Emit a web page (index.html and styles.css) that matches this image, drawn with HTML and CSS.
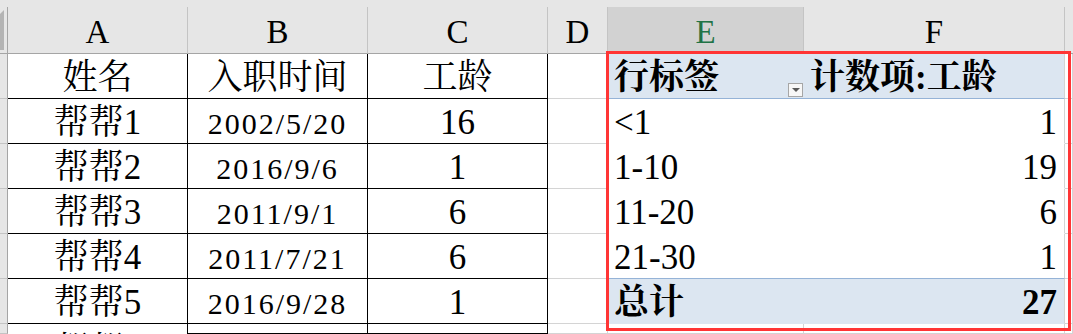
FILE: index.html
```html
<!doctype html>
<html lang="zh-CN">
  <head>
    <meta charset="utf-8">
    <title>工龄透视表</title>
    <link rel="stylesheet" href="styles.css">
  </head>
  <body>
    <div class="sheet">
      <div class="strip"></div>

      <!-- column letters -->
      <div class="corner"><div class="corner-mark"></div></div>
      <div class="colhead">A</div>
      <div class="colhead">B</div>
      <div class="colhead">C</div>
      <div class="colhead">D</div>
      <div class="colhead selected">E</div>
      <div class="colhead">F</div>
      <div class="colhead edge"></div>

      <!-- row 1 -->
      <div class="rowhead"></div>
      <div class="cell data">姓名</div>
      <div class="cell data">入职时间</div>
      <div class="cell data">工龄</div>
      <div class="cell blank"></div>
      <div class="cell pv pv-head pv-label">行标签<span class="filter-btn"></span></div>
      <div class="cell pv pv-head pv-field">计数项:工龄</div>
      <div class="cell blank"></div>

      <!-- row 2 -->
      <div class="rowhead"></div>
      <div class="cell data">帮帮1</div>
      <div class="cell data date">2002/5/20</div>
      <div class="cell data">16</div>
      <div class="cell blank"></div>
      <div class="cell pv pv-label">&lt;1</div>
      <div class="cell pv pv-num">1</div>
      <div class="cell blank"></div>

      <!-- row 3 -->
      <div class="rowhead"></div>
      <div class="cell data">帮帮2</div>
      <div class="cell data date">2016/9/6</div>
      <div class="cell data">1</div>
      <div class="cell blank"></div>
      <div class="cell pv pv-label">1-10</div>
      <div class="cell pv pv-num">19</div>
      <div class="cell blank"></div>

      <!-- row 4 -->
      <div class="rowhead"></div>
      <div class="cell data">帮帮3</div>
      <div class="cell data date">2011/9/1</div>
      <div class="cell data">6</div>
      <div class="cell blank"></div>
      <div class="cell pv pv-label">11-20</div>
      <div class="cell pv pv-num">6</div>
      <div class="cell blank"></div>

      <!-- row 5 -->
      <div class="rowhead"></div>
      <div class="cell data">帮帮4</div>
      <div class="cell data date">2011/7/21</div>
      <div class="cell data">6</div>
      <div class="cell blank"></div>
      <div class="cell pv pv-label pv-last">21-30</div>
      <div class="cell pv pv-num pv-last">1</div>
      <div class="cell blank"></div>

      <!-- row 6 -->
      <div class="rowhead"></div>
      <div class="cell data">帮帮5</div>
      <div class="cell data date">2016/9/28</div>
      <div class="cell data">1</div>
      <div class="cell blank"></div>
      <div class="cell pv pv-total pv-label">总计</div>
      <div class="cell pv pv-total pv-num">27</div>
      <div class="cell blank"></div>

      <!-- row 7, only its top shows -->
      <div class="rowhead"></div>
      <div class="cell data peek">帮帮6</div>
      <div class="cell data"></div>
      <div class="cell data"></div>
      <div class="cell blank"></div>
      <div class="cell blank"></div>
      <div class="cell blank"></div>
      <div class="cell blank"></div>
    </div>

    <!-- highlight round the pivot table -->
    <div class="pivot-frame"></div>
  </body>
</html>
```

FILE: styles.css
```css
html, body {
  margin: 0;
  padding: 0;
  background: #fff;
}

body {
  width: 1073px;
  height: 334px;
  overflow: hidden;
  position: relative;
  font-family: "Liberation Serif", "Noto Serif CJK SC", "Noto Sans CJK SC", serif;
  color: #000;
}

.sheet {
  display: grid;
  grid-template-columns: 8px 180px 180px 180px 60px 196px 261px 8px;
  grid-template-rows: 7px 47px repeat(6, 45px) 10px;
}

.strip {
  grid-column: 1 / -1;
  background: #e6e6e6;
}

/* headers */
.corner {
  background: #e6e6e6;
  border-right: 1px solid #a5a5a5;
  border-bottom: 1px solid #a5a5a5;
  padding-top: 3px;
}
.corner-mark {
  width: 4px;
  height: 40px;
  background: #b4b4b4;
  clip-path: polygon(0 4px, 4px 0, 4px 100%, 0 100%);
}

.colhead {
  background: #e6e6e6;
  border-right: 1px solid #c4c4c4;
  border-bottom: 1px solid #a5a5a5;
  display: flex;
  align-items: center;
  justify-content: center;
  padding-top: 5px;
  font-size: 33px;
  line-height: 1;
}
.colhead.selected {
  background: #d2d2d2;
  color: #217346;
}
.colhead.edge {
  border-right: 0;
}

.rowhead {
  background: #e6e6e6;
  border-right: 1px solid #a5a5a5;
  border-bottom: 1px solid #c4c4c4;
}

/* cells */
.cell {
  display: flex;
  align-items: center;
  padding-top: 5px;
  font-size: 35px;
  line-height: 1.1;
  white-space: nowrap;
  overflow: hidden;
}

.data {
  justify-content: center;
  border-right: 1px solid #000;
  border-bottom: 1px solid #000;
}
.data.date {
  font-size: 30px;
  letter-spacing: 2px;
}
.data.peek {
  align-items: flex-start;
  padding-top: 8px;
  border-bottom: 0;
}

.blank {
  border-right: 1px solid #d4d4d4;
  border-bottom: 1px solid #d4d4d4;
}

/* pivot table */
.pv {
  background: #fff;
  border-bottom: 1px solid transparent;
}
.pv-label {
  padding-left: 6px;
}
.pv-num {
  justify-content: flex-end;
  padding-right: 7px;
  border-right: 1px solid #d4d4d4;
}
.pv-head {
  background: #dce6f1;
  border-bottom-color: #95b3d7;
  font-weight: bold;
  font-size: 35px;
}
.pv-field {
  padding-left: 6px;
  border-right: 1px solid #d4d4d4;
}
.pv-last {
  border-bottom-color: #95b3d7;
}
.pv-total {
  background: #dce6f1;
  font-weight: bold;
}

.pv-head.pv-label {
  justify-content: space-between;
}
.filter-btn {
  align-self: flex-end;
  width: 13px;
  height: 12px;
  margin: 0 1px 1px 0;
  border: 1px solid #a6a6a6;
  background: #f7f7f7;
  display: flex;
  align-items: center;
  justify-content: center;
}
.filter-btn::after {
  content: "";
  border-left: 4px solid transparent;
  border-right: 4px solid transparent;
  border-top: 4px solid #595959;
}

.pivot-frame {
  position: absolute;
  left: 606px;
  top: 51px;
  width: 465px;
  height: 280px;
  box-sizing: border-box;
  border: 3px solid #ff3535;
}
```
